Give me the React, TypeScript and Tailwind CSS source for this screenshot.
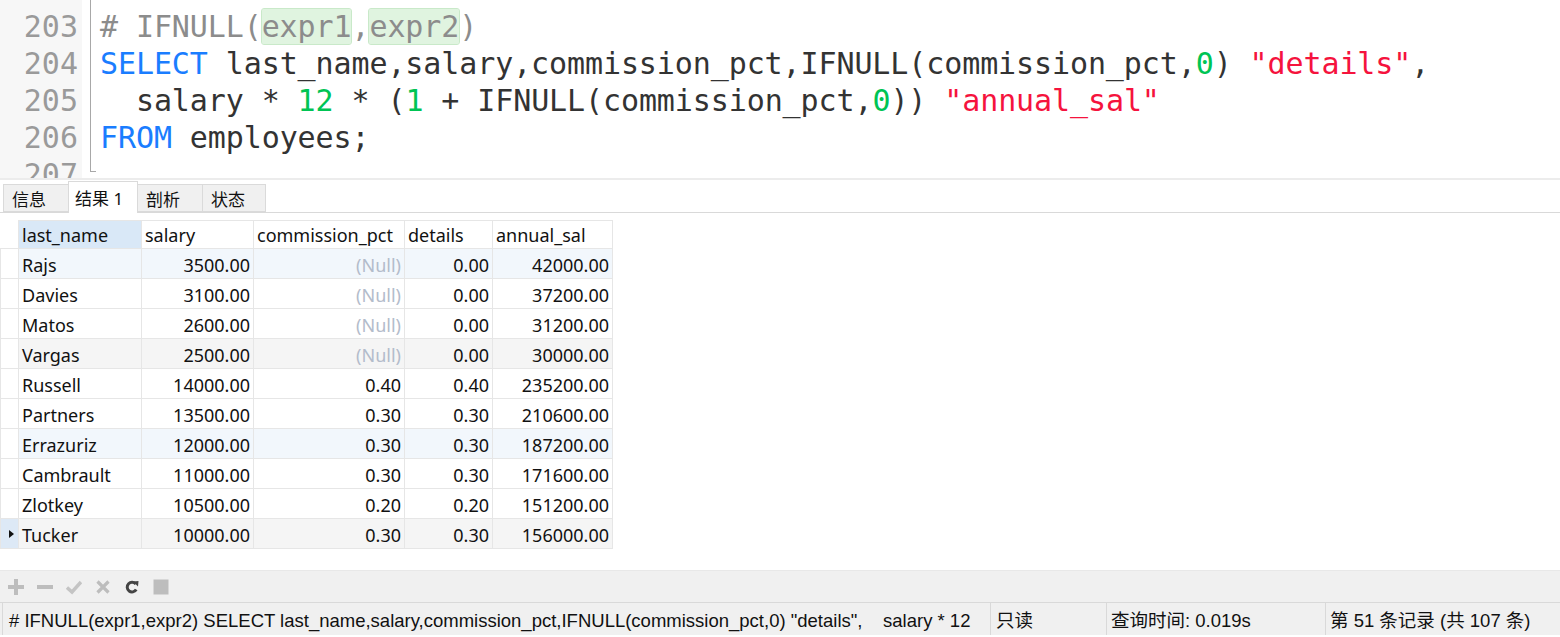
import React from 'react'

const mono = { fontFamily: '"DejaVu Sans Mono", "Liberation Mono", monospace' }

interface Row {
  name: string
  salary: string
  pct: string | null
  details: string
  annual: string
  bg: string
}

const rows: Row[] = [
  { name: 'Rajs', salary: '3500.00', pct: null, details: '0.00', annual: '42000.00', bg: 'bg-[#f2f7fc]' },
  { name: 'Davies', salary: '3100.00', pct: null, details: '0.00', annual: '37200.00', bg: 'bg-white' },
  { name: 'Matos', salary: '2600.00', pct: null, details: '0.00', annual: '31200.00', bg: 'bg-white' },
  { name: 'Vargas', salary: '2500.00', pct: null, details: '0.00', annual: '30000.00', bg: 'bg-[#f5f5f5]' },
  { name: 'Russell', salary: '14000.00', pct: '0.40', details: '0.40', annual: '235200.00', bg: 'bg-white' },
  { name: 'Partners', salary: '13500.00', pct: '0.30', details: '0.30', annual: '210600.00', bg: 'bg-white' },
  { name: 'Errazuriz', salary: '12000.00', pct: '0.30', details: '0.30', annual: '187200.00', bg: 'bg-[#f2f7fc]' },
  { name: 'Cambrault', salary: '11000.00', pct: '0.30', details: '0.30', annual: '171600.00', bg: 'bg-white' },
  { name: 'Zlotkey', salary: '10500.00', pct: '0.20', details: '0.20', annual: '151200.00', bg: 'bg-white' },
  { name: 'Tucker', salary: '10000.00', pct: '0.30', details: '0.30', annual: '156000.00', bg: 'bg-[#f5f5f5]' },
]

function Kw({ children }: { children: React.ReactNode }) {
  return <span className="text-[#1a7dff]">{children}</span>
}
function Num({ children }: { children: React.ReactNode }) {
  return <span className="text-[#00c454]">{children}</span>
}
function Str({ children }: { children: React.ReactNode }) {
  return <span className="text-[#f5133d]">{children}</span>
}
function Hl({ children }: { children: React.ReactNode }) {
  return (
    <span className="bg-[#e0f4e0] outline outline-1 outline-[#c9e9c9] rounded-[2px]">{children}</span>
  )
}

function Editor() {
  return (
    <div className="flex h-[178px] overflow-hidden bg-white" style={mono}>
      <div className="w-[82px] shrink-0 bg-[#f7f7f7] pt-[8px] pr-[4px] text-right text-[30px] leading-[37px] text-[#9a9a9a]">
        <div>203</div>
        <div>204</div>
        <div>205</div>
        <div>206</div>
        <div>207</div>
      </div>
      <div className="ml-[8px] h-[172px] w-[6px] shrink-0 border-b border-l border-[#a8a8a8]" />
      <div className="pl-[4px] pt-[8px] text-[30px] leading-[37px] text-[#333] whitespace-pre tracking-[-0.1px]">
        <div className="text-[#8c8c8c]">
          # IFNULL(<Hl>expr1</Hl>,<Hl>expr2</Hl>)
        </div>
        <div>
          <Kw>SELECT</Kw> last_name,salary,commission_pct,IFNULL(commission_pct,<Num>0</Num>) <Str>"details"</Str>,
        </div>
        <div>
          {'  '}salary * <Num>12</Num> * (<Num>1</Num> + IFNULL(commission_pct,<Num>0</Num>)) <Str>"annual_sal"</Str>
        </div>
        <div>
          <Kw>FROM</Kw> employees;
        </div>
      </div>
    </div>
  )
}

function Tabs() {
  const tab = 'h-[28px] px-[8px] pt-[3px] flex items-center border border-[#dadada] bg-[#f0f0f0] -mr-px'
  return (
    <div className="h-[35px] bg-white border-t-2 border-[#ececec] border-b border-b-[#d9d9d9] flex items-end pl-[3px] text-[17px] leading-[22px] text-[#111]">
      <div className={`${tab} w-[66px]`}>信息</div>
      <div className="h-[32px] w-[70px] px-[6px] pt-[2px] flex items-center border border-b-0 border-[#dadada] bg-white -mb-px -mr-px">
        结果 1
      </div>
      <div className={`${tab} w-[66px]`}>剖析</div>
      <div className={`${tab} w-[64px]`}>状态</div>
    </div>
  )
}

function Grid() {
  const cell = 'border border-[#e6e6e6] px-[3px] pt-[2px] h-[30px] whitespace-nowrap'
  const head = 'border border-[#e6e6e6] px-[3px] pt-[1px] text-left font-normal'
  return (
    <div className="h-[357px] bg-white pt-[7px]">
      <table className="border-collapse text-[18px] leading-[24px] text-[#111] table-fixed">
        <colgroup>
          <col className="w-[18px]" />
          <col className="w-[123px]" />
          <col className="w-[112px]" />
          <col className="w-[151px]" />
          <col className="w-[88px]" />
          <col className="w-[120px]" />
        </colgroup>
        <thead>
          <tr className="h-[28px]">
            <th className="border-0 border-b border-[#e6e6e6]" />
            <th className={`${head} bg-[#d9e8f7]`}>last_name</th>
            <th className={head}>salary</th>
            <th className={head}>commission_pct</th>
            <th className={head}>details</th>
            <th className={head}>annual_sal</th>
          </tr>
        </thead>
        <tbody>
          {rows.map((r, i) => {
            const last = i === rows.length - 1
            return (
              <tr key={r.name} className={r.bg}>
                <td className={`border border-[#e6e6e6] p-0 ${last ? 'bg-[#dde9f6]' : 'bg-white'}`}>
                  {last && (
                    <svg viewBox="0 0 10 10" className="w-[10px] h-[10px] ml-[6px]">
                      <path d="M2 1 L7 5 L2 9 Z" fill="#111" />
                    </svg>
                  )}
                </td>
                <td className={`${cell} text-left`}>{r.name}</td>
                <td className={`${cell} text-right`}>{r.salary}</td>
                <td className={`${cell} text-right ${r.pct ? '' : 'text-[#b3bccb]'}`}>{r.pct ?? '(Null)'}</td>
                <td className={`${cell} text-right`}>{r.details}</td>
                <td className={`${cell} text-right`}>{r.annual}</td>
              </tr>
            )
          })}
        </tbody>
      </table>
    </div>
  )
}

function Toolbar() {
  return (
    <div className="h-[32px] bg-[#f0f0f0] border-t border-[#e8e8e8] flex items-center gap-[13px] pl-[8px]">
      <svg viewBox="0 0 16 16" className="w-[16px] h-[16px]">
        <path d="M6 0h4v6h6v4h-6v6h-4v-6h-6v-4h6z" fill="#bdbdbd" />
      </svg>
      <svg viewBox="0 0 16 16" className="w-[16px] h-[16px]">
        <rect x="0" y="6" width="16" height="4" fill="#bdbdbd" />
      </svg>
      <svg viewBox="0 0 16 16" className="w-[16px] h-[16px]">
        <path d="M1 8.5 L6 13 L15 3" stroke="#c4c4c4" strokeWidth="3.4" fill="none" />
      </svg>
      <svg viewBox="0 0 16 16" className="w-[16px] h-[16px]">
        <path d="M2.5 2.5 L13.5 13.5 M13.5 2.5 L2.5 13.5" stroke="#bdbdbd" strokeWidth="3.2" fill="none" />
      </svg>
      <svg viewBox="0 0 16 16" className="w-[16px] h-[16px]">
        <path d="M12.2 10.5 A4.8 4.8 0 1 1 11.8 5.2" stroke="#444" strokeWidth="3" fill="none" />
        <path d="M9 2.5 L14.5 2 L14 7.5 Z" fill="#444" />
      </svg>
      <svg viewBox="0 0 16 16" className="w-[16px] h-[16px]">
        <rect x="0.5" y="0.5" width="15" height="15" fill="#bdbdbd" />
      </svg>
    </div>
  )
}

function StatusBar() {
  return (
    <div
      className="h-[33px] bg-[#f0f0f0] border-t border-[#d9d9d9] flex items-center text-[18.5px] text-[#111]"
      style={{ fontFamily: '"Liberation Sans", "Noto Sans CJK SC", sans-serif' }}
    >
      <div className="w-[988px] shrink-0 h-full border-l border-[#d9d9d9] ml-[2px] pl-[6px] pt-[3px] flex items-center overflow-hidden whitespace-pre">
        {'# IFNULL(expr1,expr2) SELECT last_name,salary,commission_pct,IFNULL(commission_pct,0) "details",    salary * 12'}
      </div>
      <div className="w-[116px] shrink-0 h-full border-l border-[#d9d9d9] pl-[5px] pt-[3px] flex items-center">只读</div>
      <div className="w-[219px] shrink-0 h-full border-l border-[#d9d9d9] pl-[4px] pt-[3px] flex items-center">查询时间: 0.019s</div>
      <div className="flex-1 h-full border-l border-[#d9d9d9] pl-[4px] pt-[3px] flex items-center whitespace-nowrap">
        第 51 条记录 (共 107 条)
      </div>
    </div>
  )
}

export default function App() {
  return (
    <div
      className="w-[1560px] h-[637px] overflow-hidden bg-white flex flex-col"
      style={{ fontFamily: '"Noto Sans", "Noto Sans CJK SC", sans-serif' }}
    >
      <Editor />
      <Tabs />
      <Grid />
      <Toolbar />
      <StatusBar />
    </div>
  )
}
